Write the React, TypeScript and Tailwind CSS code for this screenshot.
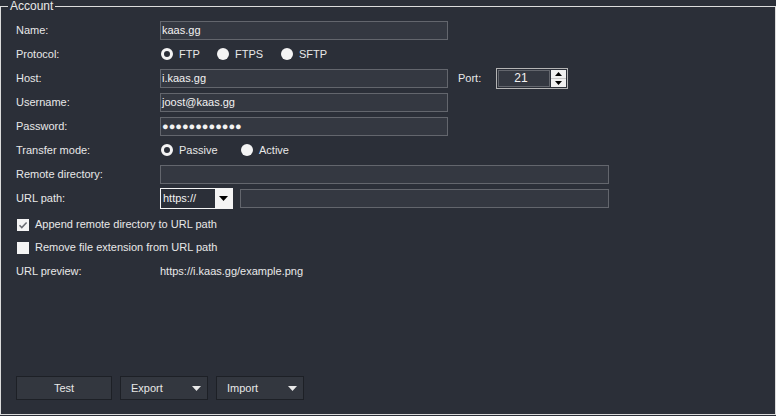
import React from "react";

const font = { fontFamily: '"Liberation Sans", Arial, sans-serif' };

const Row: React.FC<{ label?: string; className?: string; children?: React.ReactNode }> = ({ label, className, children }) => (
  <div className={`flex items-center h-[24px] ${className ?? ""}`}>
    <div className="w-[144px] shrink-0">{label}</div>
    {children}
  </div>
);

const TextBox: React.FC<{ value?: string; width: string }> = ({ value, width }) => (
  <div className={`${width} h-[19px] bg-[#343841] border border-[#63666d] flex items-center px-[1px] text-[#f2f2f2]`}>
    {value}
  </div>
);

const Radio: React.FC<{ label: string; checked?: boolean; width: string }> = ({ label, checked, width }) => (
  <div className={`flex items-center ${width}`}>
    {checked ? (
      <span className="w-[12px] h-[12px] rounded-full border-[3px] border-[#f4f4f4] bg-[#2b2f38] ml-[1px]" />
    ) : (
      <span className="w-[12px] h-[12px] rounded-full bg-[#f4f4f4] ml-[1px]" />
    )}
    <span className="ml-[6px]">{label}</span>
  </div>
);

const Caret = () => (
  <svg width="9" height="5" viewBox="0 0 9 5" className="shrink-0">
    <path d="M0 0h9L4.5 5z" fill="currentColor" />
  </svg>
);

const Check: React.FC<{ label: string; checked?: boolean }> = ({ label, checked }) => (
  <div className="flex items-center h-[23px] pl-[1px]">
    <span className="w-[12px] h-[12px] bg-[#f4f4f4] flex items-center justify-center">
      {checked && (
        <svg width="10" height="10" viewBox="0 0 10 10">
          <path d="M1.5 5.2l2.3 2.4L8.6 2.4" stroke="#6a6d73" strokeWidth="1.5" fill="none" />
        </svg>
      )}
    </span>
    <span className="ml-[6px]">{label}</span>
  </div>
);

export default function App() {
  return (
    <div className="w-[776px] h-[416px] bg-[#2b2f38] text-[11px] text-[#e8e8e8] overflow-hidden" style={font}>
      <fieldset className="h-[415px] border border-[#dcdcdc] mx-0 px-[15px]">
        <legend className="ml-[-8px] px-[2px] leading-[12px] text-[12px] text-[#e8e8e8]">Account</legend>

        <div className="pt-[6px]">
          <Row label="Name:">
            <TextBox value="kaas.gg" width="w-[288px]" />
          </Row>
          <Row label="Protocol:">
            <Radio label="FTP" checked width="w-[56px]" />
            <Radio label="FTPS" width="w-[64px]" />
            <Radio label="SFTP" width="w-[60px]" />
          </Row>
          <Row label="Host:">
            <TextBox value="i.kaas.gg" width="w-[288px]" />
            <span className="ml-[10px] w-[38px]">Port:</span>
            <div className="w-[72px] h-[21px] border border-[#b4b4b4] bg-[#2b2f38] flex p-[1px]">
              <div className="flex-1 border border-[#63666d] bg-[#343841] flex items-center justify-center pr-[6px] text-[12px] text-[#f2f2f2]">
                21
              </div>
              <div className="w-[15px] ml-[1px] flex flex-col bg-[#f0f0f0] text-black">
                <div className="flex-1 flex items-center justify-center border-b border-[#c8c8c8]">
                  <svg width="7" height="4" viewBox="0 0 7 4"><path d="M0 4h7L3.5 0z" fill="currentColor" /></svg>
                </div>
                <div className="flex-1 flex items-center justify-center">
                  <svg width="7" height="4" viewBox="0 0 7 4"><path d="M0 0h7L3.5 4z" fill="currentColor" /></svg>
                </div>
              </div>
            </div>
          </Row>
          <Row label="Username:">
            <TextBox value="joost@kaas.gg" width="w-[288px]" />
          </Row>
          <Row label="Password:">
            <TextBox value="●●●●●●●●●●●●" width="w-[288px]" />
          </Row>
          <Row label="Transfer mode:">
            <Radio label="Passive" checked width="w-[80px]" />
            <Radio label="Active" width="w-[60px]" />
          </Row>
          <Row label="Remote directory:">
            <TextBox width="w-[449px]" />
          </Row>
          <Row label="URL path:">
            <div className="w-[73px] h-[21px] border border-[#f4f4f4] bg-[#f4f4f4] flex">
              <div className="w-[54px] bg-[#2b2f38] flex items-center px-[2px] text-[#f2f2f2]">https://</div>
              <div className="flex-1 flex items-center justify-center text-black">
                <Caret />
              </div>
            </div>
            <div className="ml-[7px]">
              <TextBox width="w-[369px]" />
            </div>
          </Row>
          <div className="mt-[3px]">
            <Check label="Append remote directory to URL path" checked />
            <Check label="Remove file extension from URL path" />
          </div>
          <Row label="URL preview:">
            <span>https://i.kaas.gg/example.png</span>
          </Row>

          <div className="flex gap-[8px] mt-[93px]">
            <button className="w-[96px] h-[24px] bg-[#33373f] border border-[#1d2026] text-[#e8e8e8]">Test</button>
            <button className="w-[88px] h-[24px] bg-[#33373f] border border-[#1d2026] text-[#e8e8e8] flex items-center justify-between pl-[10px] pr-[6px]">
              Export
              <Caret />
            </button>
            <button className="w-[88px] h-[24px] bg-[#33373f] border border-[#1d2026] text-[#e8e8e8] flex items-center justify-between pl-[10px] pr-[6px]">
              Import
              <Caret />
            </button>
          </div>
        </div>
      </fieldset>
    </div>
  );
}
